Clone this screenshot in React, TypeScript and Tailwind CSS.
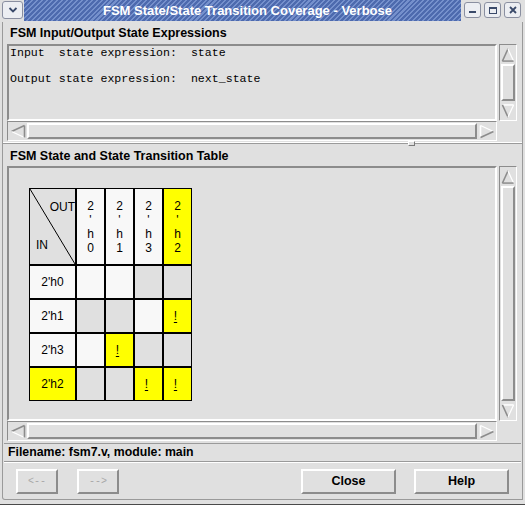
import React from "react";

function ArrowUp() {
  return (
    <svg width="15" height="16" viewBox="0 0 15 16" className="block">
      <path d="M1.5 14.5 L7.5 1.5" stroke="#8c8c8c" strokeWidth="1.6" fill="none" />
      <path d="M7.5 1.5 L13.5 14.5" stroke="#ffffff" strokeWidth="1.3" fill="none" />
      <path d="M1.5 14.5 H13.5" stroke="#8c8c8c" strokeWidth="1.6" fill="none" />
    </svg>
  );
}
function ArrowDown() {
  return (
    <svg width="15" height="16" viewBox="0 0 15 16" className="block">
      <path d="M1.5 1.5 H13.5" stroke="#ffffff" strokeWidth="1.6" fill="none" />
      <path d="M1.5 1.5 L7.5 14.5" stroke="#8c8c8c" strokeWidth="1.6" fill="none" />
      <path d="M7.5 14.5 L13.5 1.5" stroke="#ffffff" strokeWidth="1.3" fill="none" />
    </svg>
  );
}
function ArrowLeft() {
  return (
    <svg width="16" height="15" viewBox="0 0 16 15" className="block">
      <path d="M14.5 1.5 L1.5 7.5" stroke="#8c8c8c" strokeWidth="1.6" fill="none" />
      <path d="M1.5 7.5 L14.5 13.5" stroke="#ffffff" strokeWidth="1.3" fill="none" />
      <path d="M14.5 1.5 V13.5" stroke="#8c8c8c" strokeWidth="1.6" fill="none" />
    </svg>
  );
}
function ArrowRight() {
  return (
    <svg width="16" height="15" viewBox="0 0 16 15" className="block">
      <path d="M1.5 1.5 V13.5" stroke="#ffffff" strokeWidth="1.6" fill="none" />
      <path d="M1.5 1.5 L14.5 7.5" stroke="#ffffff" strokeWidth="1.3" fill="none" />
      <path d="M14.5 7.5 L1.5 13.5" stroke="#8c8c8c" strokeWidth="1.6" fill="none" />
    </svg>
  );
}

function VScroll() {
  return (
    <div className="ml-[2px] w-[18px] flex flex-col border border-t-[#8c8c8c] border-l-[#8c8c8c] border-b-white border-r-white p-[1px]">
      <div className="h-[17px] flex items-center justify-center">
        <ArrowUp />
      </div>
      <div className="flex-1 my-[1px] border-2 border-t-white border-l-white border-b-[#8c8c8c] border-r-[#8c8c8c]" />
      <div className="h-[17px] flex items-center justify-center">
        <ArrowDown />
      </div>
    </div>
  );
}

function HScroll() {
  return (
    <div className="w-[490px] h-full flex border border-t-[#8c8c8c] border-l-[#8c8c8c] border-b-white border-r-white p-[1px]">
      <div className="w-[17px] flex items-center justify-center">
        <ArrowLeft />
      </div>
      <div className="flex-1 mx-[1px] border-2 border-t-white border-l-white border-b-[#8c8c8c] border-r-[#8c8c8c]" />
      <div className="w-[17px] flex items-center justify-center">
        <ArrowRight />
      </div>
    </div>
  );
}

const BG: Record<string, string> = {
  W: "bg-[#f8f8f8]",
  G: "bg-[#e0e0e0]",
  Y: "bg-[#ffff00]",
};

const cols = [
  { c: "0", bg: "W" },
  { c: "1", bg: "W" },
  { c: "3", bg: "W" },
  { c: "2", bg: "Y" },
];

const rows = [
  { label: "2'h0", lb: "W", cells: ["W", "W", "G", "G"], marks: [0, 0, 0, 0] },
  { label: "2'h1", lb: "W", cells: ["G", "G", "W", "Y"], marks: [0, 0, 0, 1] },
  { label: "2'h3", lb: "W", cells: ["W", "Y", "G", "G"], marks: [0, 1, 0, 0] },
  { label: "2'h2", lb: "Y", cells: ["G", "G", "Y", "Y"], marks: [0, 0, 1, 1] },
];

function FsmTable() {
  return (
    <div className="grid grid-cols-[45px_27px_27px_27px_27px] grid-rows-[75px_32px_32px_32px_32px] gap-[2px] p-[1px] bg-black w-fit text-[12px] text-black font-['Liberation_Sans',sans-serif]">
      <div className="relative bg-[#e0e0e0] flex flex-col justify-between pt-[11px] pb-[12px]">
        <svg className="absolute inset-0" width="45" height="75" viewBox="0 0 45 75" preserveAspectRatio="none">
          <line x1="0" y1="0" x2="45" y2="75" stroke="#000" strokeWidth="1" />
        </svg>
        <div className="self-end leading-[14px] relative">OUT</div>
        <div className="self-start pl-[6px] leading-[14px] relative">IN</div>
      </div>
      {cols.map((col, i) => (
        <div key={i} className={`${BG[col.bg]} flex flex-col items-center justify-center`}>
          {["2", "'", "h", col.c].map((ch, j) => (
            <div key={j} className="h-[14px] leading-[14px]">
              {ch}
            </div>
          ))}
        </div>
      ))}
      {rows.map((r, i) => (
        <React.Fragment key={i}>
          <div className={`${BG[r.lb]} flex items-center justify-center`}>{r.label}</div>
          {r.cells.map((c, j) => (
            <div key={j} className={`${BG[c]} flex items-center justify-center`}>
              {r.marks[j] ? <span className="underline underline-offset-[2px] pr-[4px]">!</span> : null}
            </div>
          ))}
        </React.Fragment>
      ))}
    </div>
  );
}

export default function App() {
  return (
    <div className="w-[525px] h-[505px] bg-[#e0e0e0] flex flex-col overflow-hidden border-b border-[#4a4a4a] font-['Liberation_Sans',Arial,sans-serif] text-black">
      {/* title bar */}
      <div className="h-[22px] flex items-start shrink-0">
        <div className="ml-[2px] mt-[1px] w-[21px] h-[18px] rounded-[3px] border border-[#8a8fa0] bg-[#eceef2] flex items-center justify-center">
          <svg width="10" height="8" viewBox="0 0 10 8">
            <path d="M1.5 2 L5 5.5 L8.5 2" stroke="#3a4a6a" strokeWidth="1.8" fill="none" />
          </svg>
        </div>
        <div className="ml-[1px] flex-1 h-[21px] flex items-center justify-center pl-[10px] bg-[repeating-linear-gradient(135deg,#4d6aae_0px,#4d6aae_2px,#7590cc_2px,#7590cc_3.5px)]">
          <span className="text-white font-bold text-[13px] leading-none">FSM State/State Transition Coverage - Verbose</span>
        </div>
        <div className="flex gap-[3px] ml-[3px] mr-[4px] mt-[2px]">
          <div className="w-[17px] h-[16px] rounded-[3px] border border-[#8a8fa0] bg-[#eceef2] flex items-center justify-center">
            <div className="w-[7px] h-[2px] bg-[#3a4a6a] mt-[3px]" />
          </div>
          <div className="w-[17px] h-[16px] rounded-[3px] border border-[#8a8fa0] bg-[#eceef2] flex items-center justify-center">
            <div className="w-[8px] h-[7px] border border-[#3a4a6a] border-t-2" />
          </div>
          <div className="w-[17px] h-[16px] rounded-[3px] border border-[#8a8fa0] bg-[#eceef2] flex items-center justify-center">
            <svg width="8" height="8" viewBox="0 0 8 8">
              <path d="M1 1 L7 7 M7 1 L1 7" stroke="#3a4a6a" strokeWidth="1.8" />
            </svg>
          </div>
        </div>
      </div>

      {/* body */}
      <div className="flex-1 mx-[2px] mb-[4px] border-x border-b border-[#9a9a9a] rounded-bl-[3px] flex flex-col">
        <div className="h-[22px] flex items-center pl-[7px] font-bold text-[12.5px] shrink-0">
          FSM Input/Output State Expressions
        </div>
        <div className="h-[77px] flex pl-[4px] shrink-0">
          <div className="w-[490px] border-2 border-t-[#8c8c8c] border-l-[#8c8c8c] border-b-white border-r-white pl-[1px] pt-[0px] font-['Liberation_Mono',monospace] text-[11.6px] leading-[13px] whitespace-pre">
            <div>Input  state expression:  state</div>
            <div>&nbsp;</div>
            <div>Output state expression:  next_state</div>
          </div>
          <VScroll />
        </div>
        <div className="h-[20px] pl-[4px] shrink-0">
          <HScroll />
        </div>
        <div className="h-[5px] shrink-0 flex flex-col relative">
          <div className="mt-[1px] h-[1px] bg-white" />
          <div className="h-[1px] bg-[#9a9a9a]" />
          <div className="absolute left-[405px] top-[0px] w-[7px] h-[5px] border border-t-white border-l-white border-b-[#7a7a7a] border-r-[#7a7a7a] bg-[#e0e0e0]" />
        </div>
        <div className="h-[20px] flex items-center pl-[7px] font-bold text-[12.5px] shrink-0">
          FSM State and State Transition Table
        </div>
        <div className="h-[255px] flex pl-[4px] shrink-0">
          <div className="w-[490px] border-2 border-t-[#8c8c8c] border-l-[#8c8c8c] border-b-white border-r-white pl-[20px] pt-[20px]">
            <FsmTable />
          </div>
          <VScroll />
        </div>
        <div className="h-[20px] pl-[4px] shrink-0">
          <HScroll />
        </div>
        <div className="h-[2px] shrink-0" />
        <div className="h-[19px] mx-[1px] border-y border-t-[#9a9a9a] border-b-[#9a9a9a] flex items-center pl-[4px] font-bold text-[12.3px] shrink-0">
          Filename: fsm7.v, module: main
        </div>
        <div className="h-[1px] bg-white mx-[1px] shrink-0" />
        <div className="flex items-start pt-[6px] pl-[13px] pr-[13px]">
          <div className="w-[42px] h-[25px] border-2 border-t-white border-l-white border-b-[#8c8c8c] border-r-[#8c8c8c] flex items-center justify-center text-[10px] text-[#a8a8a8] font-['Liberation_Mono',monospace]">
            &lt;--
          </div>
          <div className="ml-[19px] w-[42px] h-[25px] border-2 border-t-white border-l-white border-b-[#8c8c8c] border-r-[#8c8c8c] flex items-center justify-center text-[10px] text-[#a8a8a8] font-['Liberation_Mono',monospace]">
            --&gt;
          </div>
          <div className="flex-1" />
          <div className="w-[95px] h-[25px] border-2 border-t-white border-l-white border-b-[#8c8c8c] border-r-[#8c8c8c] flex items-center justify-center font-bold text-[12.5px]">
            Close
          </div>
          <div className="ml-[18px] w-[95px] h-[25px] border-2 border-t-white border-l-white border-b-[#8c8c8c] border-r-[#8c8c8c] flex items-center justify-center font-bold text-[12.5px]">
            Help
          </div>
        </div>
      </div>
    </div>
  );
}
